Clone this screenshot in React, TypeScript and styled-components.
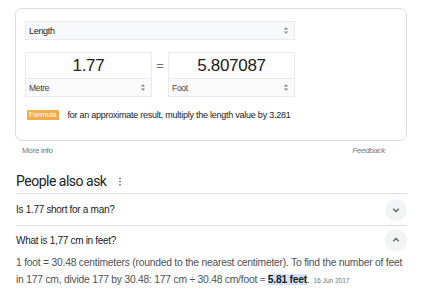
import React from "react";
import styled, {createGlobalStyle} from "styled-components";

const GlobalStyle = createGlobalStyle`
  body {
    margin: 0;
    background: #fff;
    font-family: Arial, "Liberation Sans", sans-serif;
    color: #202124;
  }
`

const SelectArrows = () => (
    <svg width="6" height="9" viewBox="0 0 6 9">
        <path d="M0.8 3.6 L3 1.2 L5.2 3.6 Z M0.8 5.4 L3 7.8 L5.2 5.4 Z" fill="#80868b"/>
    </svg>
);

const Chevron = ({up}: { up?: boolean }) => (
    <svg width="10" height="10" viewBox="0 0 10 10">
        <path d={up ? "M2.2 6.3 L5 3.5 L7.8 6.3" : "M2.2 3.7 L5 6.5 L7.8 3.7"} fill="none" stroke="#5f6368"
              strokeWidth="1.3"/>
    </svg>
);

export default function App() {
    return (
        <Page>
            <GlobalStyle/>
            <Card>
                <Select>
                    <span>Length</span>
                    <SelectArrows/>
                </Select>
                <ConvertRow>
                    <UnitBox>
                        <Value>1.77</Value>
                        <UnitSelect>
                            <span>Metre</span>
                            <SelectArrows/>
                        </UnitSelect>
                    </UnitBox>
                    <Equals>=</Equals>
                    <UnitBox>
                        <Value>5.807087</Value>
                        <UnitSelect>
                            <span>Foot</span>
                            <SelectArrows/>
                        </UnitSelect>
                    </UnitBox>
                </ConvertRow>
                <FormulaRow>
                    <Badge>Formula</Badge>
                    <FormulaText>for an approximate result, multiply the length value by 3.281</FormulaText>
                </FormulaRow>
            </Card>
            <FooterRow>
                <span>More info</span>
                <Feedback>Feedback</Feedback>
            </FooterRow>
            <Section>
                <SectionTitle>
                    People also ask
                    <svg width="4" height="9" viewBox="0 0 4 9">
                        <circle cx="2" cy="1.3" r="0.9" fill="#70757a"/>
                        <circle cx="2" cy="4.5" r="0.9" fill="#70757a"/>
                        <circle cx="2" cy="7.7" r="0.9" fill="#70757a"/>
                    </svg>
                </SectionTitle>
                <Question>
                    <span>Is 1.77 short for a man?</span>
                    <ToggleCircle><Chevron/></ToggleCircle>
                </Question>
                <Question $open>
                    <span>What is 1,77 cm in feet?</span>
                    <ToggleCircle><Chevron up/></ToggleCircle>
                </Question>
                <Answer>
                    1 foot = 30.48 centimeters (rounded to the nearest centimeter). To find the number of feet
                    in 177 cm, divide 177 by 30.48: 177 cm ÷ 30.48 cm/foot ≈ <Highlight>5.81 feet</Highlight>.
                    <DateText>16 Jun 2017</DateText>
                </Answer>
            </Section>
        </Page>
    );
}

const Page = styled.div`
  width: 421px;
  height: 300px;
  overflow: hidden;
  padding-top: 8px;
  box-sizing: border-box;
`

const Card = styled.div`
  margin: 0 14px 0 15px;
  height: 133px;
  box-sizing: border-box;
  border: 1px solid #dadce0;
  border-radius: 7px;
  padding: 12px 9px 0 9px;
`

const Select = styled.div`
  width: 270px;
  height: 19px;
  box-sizing: border-box;
  border: 1px solid #e8eaed;
  background: #f8f9fa;
  display: flex;
  align-items: center;
  justify-content: space-between;
  padding: 0 5px 0 3px;
  font-size: 9px;
  letter-spacing: -0.3px;
  color: #202124;
`

const ConvertRow = styled.div`
  display: flex;
  margin-top: 12px;
`

const UnitBox = styled.div`
  width: 127px;
  height: 45px;
  box-sizing: border-box;
  border: 1px solid #e8eaed;
  display: flex;
  flex-direction: column;
`

const Value = styled.div`
  height: 25px;
  display: flex;
  align-items: center;
  justify-content: center;
  font-size: 17px;
  letter-spacing: -0.3px;
  color: #202124;
`

const UnitSelect = styled.div`
  flex: 1;
  border-top: 1px solid #e8eaed;
  background: #fafafa;
  display: flex;
  align-items: center;
  justify-content: space-between;
  padding: 0 5px 0 3px;
  font-size: 8.5px;
  letter-spacing: -0.3px;
  color: #3c4043;
`

const Equals = styled.div`
  width: 16px;
  display: flex;
  align-items: center;
  justify-content: center;
  height: 26px;
  font-size: 13px;
  color: #70757a;
`

const FormulaRow = styled.div`
  display: flex;
  align-items: center;
  margin-top: 13px;
  padding-left: 2px;
`

const Badge = styled.span`
  background: #f2ad48;
  color: #fff;
  font-size: 7.5px;
  line-height: 10px;
  padding: 0 2px;
`

const FormulaText = styled.span`
  margin-left: 9px;
  font-size: 9px;
  letter-spacing: -0.25px;
  color: #202124;
`

const FooterRow = styled.div`
  display: flex;
  justify-content: space-between;
  padding: 3px 36px 0 22px;
  font-size: 8px;
  line-height: 13px;
  letter-spacing: -0.3px;
  color: #70757a;
`

const Feedback = styled.span`
  font-style: italic;
`

const Section = styled.div`
  margin: 0 14px 0 16px;
  padding-top: 14px;
`

const SectionTitle = styled.div`
  display: flex;
  align-items: center;
  gap: 12px;
  font-family: Roboto, Arial, sans-serif;
  font-size: 14px;
  letter-spacing: -0.5px;
  line-height: 20px;
  color: #202124;
  padding-bottom: 2px;
  border-bottom: 1px solid #dadce0;
`

const Question = styled.div<{ $open?: boolean }>`
  height: ${p => (p.$open ? "28px" : "31px")};
  display: flex;
  align-items: center;
  justify-content: space-between;
  font-size: 10px;
  letter-spacing: -0.3px;
  color: #202124;
  border-bottom: ${p => (p.$open ? "none" : "1px solid #dadce0")};
`

const ToggleCircle = styled.div`
  width: 22px;
  height: 22px;
  border-radius: 50%;
  background: #f1f3f4;
  display: flex;
  align-items: center;
  justify-content: center;
`

const Answer = styled.div`
  font-size: 10.3px;
  letter-spacing: -0.22px;
  line-height: 17px;
  color: #4d5156;
`

const Highlight = styled.b`
  background: #d3e3fd;
  color: #202124;
  font-weight: 700;
`

const DateText = styled.span`
  margin-left: 4px;
  font-size: 6.5px;
  letter-spacing: 0;
  color: #70757a;
`
